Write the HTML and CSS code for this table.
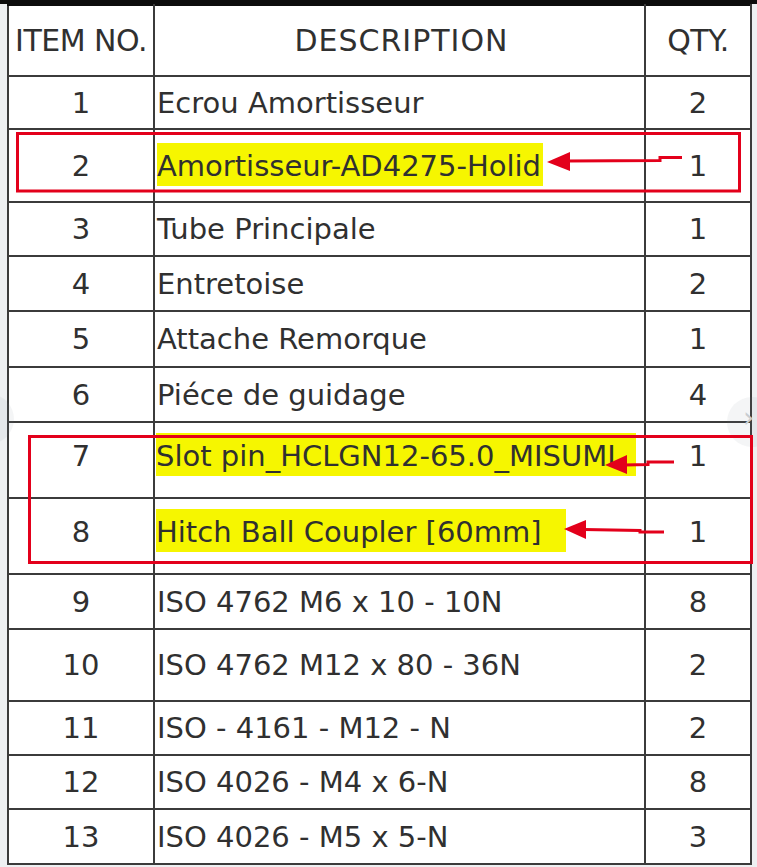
FILE: index.html
```html
<!DOCTYPE html>
<html lang="fr">
<head>
<meta charset="utf-8">
<title>BOM</title>
<link rel="stylesheet" href="styles.css">
</head>
<body>
<div class="topbar"></div>
<table class="bom">
  <colgroup>
    <col class="c-item">
    <col class="c-desc">
    <col class="c-qty">
  </colgroup>
  <thead>
    <tr class="h-head">
      <th class="item">ITEM NO.</th>
      <th class="desc-h">DESCRIPTION</th>
      <th class="qty">QTY.</th>
    </tr>
  </thead>
  <tbody>
    <tr class="h53"><td class="item">1</td><td class="desc">Ecrou Amortisseur</td><td class="qty">2</td></tr>
    <tr class="h73"><td class="item">2</td><td class="desc"><span class="hl">Amortisseur-AD4275-Holid</span></td><td class="qty">1</td></tr>
    <tr class="h54"><td class="item">3</td><td class="desc">Tube Principale</td><td class="qty">1</td></tr>
    <tr class="h55"><td class="item">4</td><td class="desc">Entretoise</td><td class="qty">2</td></tr>
    <tr class="h56"><td class="item">5</td><td class="desc">Attache Remorque</td><td class="qty">1</td></tr>
    <tr class="h55"><td class="item">6</td><td class="desc">Piéce de guidage</td><td class="qty">4</td></tr>
    <tr class="h76 raise"><td class="item">7</td><td class="desc"><span class="hl hl-tail">Slot pin_HCLGN12-65.0_MISUMI</span></td><td class="qty">1</td></tr>
    <tr class="h76 raise"><td class="item">8</td><td class="desc"><span class="hl hl-tail hl-tail-wide">Hitch Ball Coupler [60mm]</span></td><td class="qty">1</td></tr>
    <tr class="h55"><td class="item">9</td><td class="desc">ISO 4762 M6 x 10 - 10N</td><td class="qty">8</td></tr>
    <tr class="h72"><td class="item">10</td><td class="desc">ISO 4762 M12 x 80 - 36N</td><td class="qty">2</td></tr>
    <tr class="h54"><td class="item">11</td><td class="desc">ISO - 4161 - M12 - N</td><td class="qty">2</td></tr>
    <tr class="h54"><td class="item">12</td><td class="desc">ISO 4026 - M4 x 6-N</td><td class="qty">8</td></tr>
    <tr class="h55"><td class="item">13</td><td class="desc">ISO 4026 - M5 x 5-N</td><td class="qty">3</td></tr>
  </tbody>
</table>

<div class="nav nav-left"></div>
<div class="nav nav-right"><span class="chev">›</span></div>

<svg class="marks" width="757" height="867" viewBox="0 0 757 867" aria-hidden="true">
  <g fill="none" stroke="#e3001b" stroke-width="3">
    <rect x="17.5" y="133.5" width="722" height="57.5"/>
    <rect x="29.5" y="436.5" width="722" height="126"/>
  </g>
  <g stroke="#e3001b" stroke-width="3" fill="none">
    <path d="M682 157.5 L660 157.5 L660 160.5 L566 161"/>
    <path d="M674 462 L648 462 L648 464.5 L624 465"/>
    <path d="M664 532 L640 532 L640 530.5 L584 529.5"/>
  </g>
  <g fill="#e3001b">
    <polygon points="547,162 570,152 570,171"/>
    <polygon points="605,465 627,455 627,474"/>
    <polygon points="564,529 586,520 586,539"/>
  </g>
</svg>
</body>
</html>
```

FILE: styles.css
```css
html, body {
  margin: 0;
  padding: 0;
}

body {
  width: 757px;
  height: 867px;
  overflow: hidden;
  background: #eef0f2;
  position: relative;
  font-family: "DejaVu Sans", "Liberation Sans", sans-serif;
  color: #303030;
}

.topbar {
  height: 4px;
  background: #0d0d0d;
}

.bom {
  margin-left: 7px;
  width: 744px;
  border-collapse: collapse;
  background: #ffffff;
  table-layout: fixed;
  font-size: 29px;
}

.c-item { width: 146px; }
.c-desc { width: 491px; }
.c-qty { width: 106px; }

.bom th,
.bom td {
  border: 2px solid #3b3b3b;
  padding: 0;
  vertical-align: middle;
  font-weight: normal;
  white-space: nowrap;
}

.bom thead th {
  border-top-color: #0d0d0d;
  font-size: 30px;
  letter-spacing: -0.5px;
}

.bom th.desc-h {
  letter-spacing: 1px;
  text-align: center;
  padding-left: 4px;
}

.bom .item { text-align: center; }
.bom .qty { text-align: center; }

.bom td.desc {
  text-align: left;
  padding-left: 2px;
}

.h-head { height: 71px; }
.h53 { height: 53px; }
.h54 { height: 54px; }
.h55 { height: 55px; }
.h56 { height: 56px; }
.h72 { height: 72px; }
.h73 { height: 73px; }
.h76 { height: 76px; }

.bom .raise td { padding-bottom: 8px; }
.bom .raise td.desc { padding-left: 1px; }

.hl {
  background: #f6f600;
  padding: 6px 2px 3px 0;
}

.hl-tail { padding-right: 20px; }
.hl-tail-wide { padding-right: 24px; }

.nav {
  position: absolute;
  width: 50px;
  height: 50px;
  border-radius: 50%;
  background: rgba(120, 130, 140, 0.08);
}

.nav-left {
  left: -36px;
  top: 394px;
}

.nav-right {
  left: 727px;
  top: 397px;
}

.chev {
  position: absolute;
  left: 16px;
  top: 6px;
  font-size: 28px;
  line-height: 30px;
  color: #c8ccd0;
}

.marks {
  position: absolute;
  left: 0;
  top: 0;
  pointer-events: none;
}
```
